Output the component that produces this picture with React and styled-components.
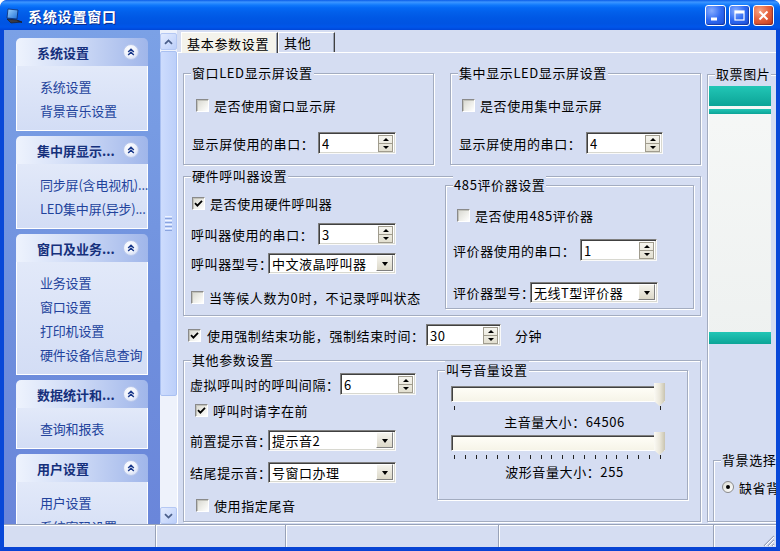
import React from 'react';
import styled, { createGlobalStyle } from 'styled-components';

const FONT = `"Noto Sans CJK SC", "Noto Sans", sans-serif`;
const BG = '#d5ddf2';

const Global = createGlobalStyle`
  html, body { margin: 0; padding: 0; overflow: hidden; background: #fff; }
  * { box-sizing: border-box; }
  body { font-family: ${FONT}; }
`;

const Window = styled.div`
  width: 780px; height: 551px; display: flex; flex-direction: column; overflow: hidden;
  background: #0a4fdc; border-radius: 7px 7px 0 0;
`;

const TitleBar = styled.div`
  height: 30px; flex: none; display: flex; align-items: center;
  padding: 1px 6px 0 5px;
  border-radius: 7px 7px 0 0;
  background: linear-gradient(180deg, #0a5ce8 0%, #3d95ff 7%, #2a8bff 11%, #1179fb 17%, #0468f4 26%, #025fea 42%, #0057e4 62%, #0054e2 78%, #0056ea 90%, #0046d8 100%);
`;

const TitleText = styled.div`
  margin-left: 5px; flex: 1; color: #fff; font-weight: 700; font-size: 14px;
  letter-spacing: 0.8px; text-shadow: 1px 1px 0 #0c2c8c;
`;

const CapButtons = styled.div` display: flex; gap: 3px; `;

const CapBtn = styled.div`
  width: 21px; height: 21px; flex: none; border: 1px solid #fff; border-radius: 3px;
  display: flex; align-items: center; justify-content: center;
  background: ${p => p.$close
    ? 'radial-gradient(circle at 30% 25%, #f6a484 0%, #e6643f 45%, #c4381a 100%)'
    : 'radial-gradient(circle at 30% 25%, #86acff 0%, #2e69f2 50%, #1a4ed6 100%)'};
  box-shadow: inset -1px -1px 1px rgba(0, 0, 60, 0.35);
`;

const Frame = styled.div`
  flex: 1; display: flex; flex-direction: column; min-height: 0;
  border-left: 4px solid #0848d8; border-right: 4px solid #0848d8; border-bottom: 4px solid #0844d4;
  background: ${BG};
`;

const Main = styled.div` height: 494px; flex: none; display: flex; overflow: hidden; `;

/* ---------- task pane ---------- */
const TaskPane = styled.div`
  width: 156px; flex: none; overflow: hidden;
  display: flex; flex-direction: column; gap: 5px; padding: 8px 12px 0;
  background: linear-gradient(180deg, #7ba1e6 0%, #6f8fdd 60%, #6a86da 100%);
`;

const PaneGroup = styled.div` display: flex; flex-direction: column; flex: none; `;

const PaneHeader = styled.div`
  height: 28px; display: flex; align-items: center; justify-content: space-between;
  padding: 0 9px 0 21px; border-radius: 5px 5px 0 0;
  background: linear-gradient(90deg, #eef3fd 0%, #cfdbf6 45%, #a0b6ea 100%);
  color: #15307c; font-weight: 700; font-size: 13px; white-space: nowrap;
`;

const PaneToggle = styled.div`
  width: 16px; height: 16px; border-radius: 50%; flex: none;
  display: flex; align-items: center; justify-content: center;
  background: radial-gradient(circle at 40% 35%, #ffffff 0%, #eef2fc 50%, #c4d1f1 100%);
  border: 1px solid #b9c8ec;
`;

const PaneBody = styled.div`
  padding: 9px 0 7px 23px; border: 1px solid #fff; border-top: none;
  background: linear-gradient(180deg, #e2e9f9 0%, #d3ddf5 100%);
`;

const PaneItem = styled.div`
  height: 24px; line-height: 24px; font-size: 13px; color: #22439c;
  white-space: nowrap; letter-spacing: -0.2px;
`;

/* ---------- scrollbar ---------- */
const VScroll = styled.div`
  width: 17px; flex: none; display: flex; flex-direction: column; padding-top: 3px;
  background: #eef2fb;
`;

const ScrollBtn = styled.div`
  height: 17px; flex: none; border: 1px solid #b5c8f3; border-radius: 2px;
  display: flex; align-items: center; justify-content: center;
  background: linear-gradient(135deg, #e3ebfe 0%, #bccffa 100%);
`;

const ScrollThumb = styled.div`
  height: 345px; flex: none; margin-top: 1px; border: 1px solid #a9c0f1; border-radius: 2px;
  display: flex; flex-direction: column; align-items: center; justify-content: center; gap: 1px;
  background: linear-gradient(90deg, #cddcfd 0%, #bccff9 100%);
`;

const GripLine = styled.span` width: 7px; height: 1px; background: ${p => p.$light ? '#eef3fe' : '#8aa4df'}; `;

const ScrollTrack = styled.div` flex: 1; `;

/* ---------- tabs ---------- */
const TabArea = styled.div`
  flex: 1; min-width: 0; display: flex; flex-direction: column; overflow: hidden; background: ${BG};
`;

const TabStrip = styled.div`
  height: 22px; flex: none; display: flex; align-items: flex-end; padding-left: 4px;
`;

const Tab = styled.div`
  width: ${p => p.$w}px; height: ${p => p.$active ? 21 : 20}px; margin-bottom: ${p => p.$active ? -1 : 0}px;
  padding-left: 5px; display: flex; align-items: center; flex: none;
  font-size: 13px; letter-spacing: 0.7px; color: #000; white-space: nowrap;
  background: ${p => p.$active ? '#f4f3ec' : BG};
  border: 1px solid; border-bottom: none; border-color: #fff #404040 transparent #fff;
  box-shadow: inset -1px 0 0 #9aa2b4;
  position: relative; z-index: ${p => p.$active ? 1 : 0};
`;

const TabPage = styled.div`
  flex: 1; min-height: 0; display: flex; gap: 6px; overflow: hidden;
  border-top: 1px solid #fff; border-left: 1px solid #fff; padding-left: 5px;
`;

const Column = styled.div`
  width: ${p => p.$w}px; flex: none; display: flex; flex-direction: column;
`;

const GroupRow = styled.div` display: flex; gap: ${p => p.$gap || 0}px; margin-top: ${p => p.$mt || 0}px; `;

const GroupBox = styled.div`
  position: relative; flex: none;
  width: ${p => p.$w}px; height: ${p => p.$h}px;
  margin-top: ${p => p.$mt || 0}px; margin-left: ${p => p.$ml || 0}px;
  padding: ${p => p.$pt || 0}px 0 0 ${p => p.$pl || 0}px;
  border: 1px solid #a3acc0;
  box-shadow: inset 1px 1px 0 #fff, 1px 1px 0 #fff;
  display: flex; flex-direction: ${p => p.$row ? 'row' : 'column'};
`;

const Legend = styled.span`
  position: absolute; top: -10px; left: 7px; padding: 0 1px; height: 18px; line-height: 18px;
  background: ${BG}; font-size: 13px; letter-spacing: 0.6px; color: #000; white-space: nowrap;
`;

const SubCol = styled.div`
  width: ${p => p.$w}px; flex: none; display: flex; flex-direction: column;
  padding: ${p => p.$pt || 0}px 0 0 ${p => p.$pl || 0}px;
`;

const Row = styled.div`
  display: flex; align-items: center; height: ${p => p.$h || 22}px; flex: none;
  margin-top: ${p => p.$mt || 0}px; margin-left: ${p => p.$ml || 0}px;
  gap: ${p => p.$gap || 0}px;
`;

const Text = styled.span`
  font-size: 13px; letter-spacing: 0.6px; color: #000; white-space: nowrap;
  ${p => p.$w ? `width: ${p.$w}px; flex: none;` : ''}
  ${p => p.$ml ? `margin-left: ${p.$ml}px;` : ''}
`;

const CheckBox = styled.span`
  width: 13px; height: 13px; flex: none; display: inline-flex; align-items: center; justify-content: center;
  border: 1px solid; border-color: #8a8a8a #ffffff #ffffff #8a8a8a;
  background: linear-gradient(135deg, #d6d6cf 0%, #eeeee9 55%, #ffffff 100%);
  box-shadow: inset 1px 1px 0 #c2c2ba;
`;

const Radio = styled.span`
  width: 12px; height: 12px; flex: none; border-radius: 50%;
  display: inline-flex; align-items: center; justify-content: center;
  border: 1px solid #8a8a8a; background: linear-gradient(135deg, #dcdcd4, #ffffff);
`;

const RadioDot = styled.span` width: 4px; height: 4px; border-radius: 50%; background: #000; `;

const FieldBox = styled.div`
  width: ${p => p.$w}px; height: ${p => p.$h || 22}px; flex: none;
  display: flex; align-items: center; padding-left: 3px;
  background: #fff;
  border: 1px solid; border-color: #7f7f7f #fafafa #fafafa #7f7f7f;
  box-shadow: inset 1px 1px 0 #404040, inset -1px -1px 0 #d8d8d0;
`;

const FieldValue = styled.span`
  flex: 1; font-size: 13px; letter-spacing: 0.5px; color: #000; white-space: nowrap; overflow: hidden;
`;

const SpinBtns = styled.div`
  width: 15px; height: 17px; margin-right: 2px; flex: none;
  display: flex; flex-direction: column;
  border: 1px solid #a09c8e; background: linear-gradient(180deg, #f6f5ef, #e2dfd0);
`;

const SpinHalf = styled.div`
  flex: 1; display: flex; align-items: center; justify-content: center;
  ${p => p.$bottom ? 'border-top: 1px solid #a09c8e;' : ''}
`;

const Tri = styled.span`
  width: 0; height: 0; border-left: 3px solid transparent; border-right: 3px solid transparent;
  ${p => p.$up ? 'border-bottom: 3px solid #000;' : 'border-top: 3px solid #000;'}
`;

const ComboBtn = styled.div`
  width: 17px; height: 16px; margin-right: 2px; flex: none;
  display: flex; align-items: center; justify-content: center;
  border: 1px solid; border-color: #ffffff #808080 #808080 #ffffff;
  background: linear-gradient(180deg, #f5f4ee, #dcd8c8);
`;

const ComboTri = styled.span`
  width: 0; height: 0; border-left: 3.5px solid transparent; border-right: 3.5px solid transparent;
  border-top: 4px solid #000; margin-top: 1px;
`;

/* ---------- slider ---------- */
const SliderWrap = styled.div`
  position: relative; width: 214px; flex: none; margin: ${p => p.$mt || 0}px 0 0 13px; padding-top: 3px;
`;

const SliderTrack = styled.div`
  height: 16px; border: 1px solid; border-color: #808080 #fff #fff #808080;
  box-shadow: inset 1px 1px 0 #404040;
  background: linear-gradient(180deg, #fffef8 0%, #f6f4e8 100%);
`;

const SliderThumb = styled.div`
  position: absolute; right: 0; top: 0; width: 11px; height: 23px;
  clip-path: polygon(0 0, 100% 0, 100% 78%, 50% 100%, 0 78%);
  background: linear-gradient(90deg, #fbfaf4 0%, #ebe8dc 50%, #c9c4b0 100%);
`;

const Ticks = styled.div`
  display: flex; justify-content: space-between; height: 4px; margin-top: 4px; padding: 0 4px 0 3px;
`;

const Tick = styled.span` width: 1px; height: 4px; background: #222; `;

const VolLabel = styled.div`
  height: 18px; line-height: 18px; margin-top: ${p => p.$mt || 0}px; padding-left: 4px;
  text-align: center; font-size: 13px; letter-spacing: 0.6px; color: #000; white-space: nowrap;
`;

/* ---------- picture ---------- */
const Picture = styled.div`
  width: 62px; flex: none; margin: 11px 0 0 1px; display: flex; flex-direction: column;
  background: linear-gradient(180deg, #f6f8f7, #eef1f0);
`;

const PicBand = styled.div`
  height: ${p => p.$h}px; flex: none; margin-top: ${p => p.$mt || 0}px;
  background: ${p => p.$teal ? 'linear-gradient(180deg, #22c6b6 0%, #0ca497 100%)' : 'transparent'};
`;

/* ---------- status bar ---------- */
const StatusBar = styled.div`
  height: 23px; flex: none; display: flex; background: ${BG};
  border-top: 1px solid #98a2b8; box-shadow: inset 0 1px 0 #fff;
`;

const StatusPanel = styled.div`
  ${p => p.$w ? `width: ${p.$w}px; flex: none;` : 'flex: 1;'}
  margin-right: 1px; border-right: ${p => p.$last ? 'none' : '1px solid #98a2b8'};
  box-shadow: ${p => p.$last ? 'none' : '1px 0 0 #fff'};
  display: flex; align-items: flex-end; justify-content: flex-end;
`;

/* ---------- small components ---------- */
const Check = ({ checked }) => (
  <CheckBox>
    {checked && (
      <svg width="9" height="9" viewBox="0 0 9 9">
        <path d="M1 4.2 L3.4 6.6 L8 1.8" fill="none" stroke="#000" strokeWidth="1.8" />
      </svg>
    )}
  </CheckBox>
);

const CheckRow = ({ checked, label, mt, ml }) => (
  <Row $mt={mt} $ml={ml} $gap={5}>
    <Check checked={checked} />
    <Text>{label}</Text>
  </Row>
);

const Spin = ({ value, w }) => (
  <FieldBox $w={w}>
    <FieldValue>{value}</FieldValue>
    <SpinBtns>
      <SpinHalf><Tri $up /></SpinHalf>
      <SpinHalf $bottom><Tri /></SpinHalf>
    </SpinBtns>
  </FieldBox>
);

const Combo = ({ value, w }) => (
  <FieldBox $w={w} $h={21}>
    <FieldValue>{value}</FieldValue>
    <ComboBtn><ComboTri /></ComboBtn>
  </FieldBox>
);

const Slider = ({ mt, ticks }) => (
  <SliderWrap $mt={mt}>
    <SliderTrack />
    <SliderThumb />
    <Ticks>
      {Array.from({ length: ticks }).map((_, i) => <Tick key={i} />)}
    </Ticks>
  </SliderWrap>
);

const DoubleChevron = () => (
  <svg width="8" height="8" viewBox="0 0 8 8">
    <path d="M1.2 4 L4 1.3 L6.8 4 M1.2 7 L4 4.3 L6.8 7" fill="none" stroke="#1b3a8c" strokeWidth="1.5" />
  </svg>
);

const ArrowIcon = ({ down }) => (
  <svg width="9" height="6" viewBox="0 0 9 6">
    <path d={down ? 'M1 1.2 L4.5 4.6 L8 1.2' : 'M1 4.8 L4.5 1.4 L8 4.8'} fill="none" stroke="#4b5f8a" strokeWidth="1.8" />
  </svg>
);

const AppIcon = () => (
  <svg width="18" height="18" viewBox="0 0 18 18">
    <defs>
      <linearGradient id="scr" x1="0" y1="0" x2="1" y2="1">
        <stop offset="0" stopColor="#9fd4ff" />
        <stop offset="1" stopColor="#1d6fd6" />
      </linearGradient>
    </defs>
    <polygon points="3,2 13,3 12,12 2,11" fill="url(#scr)" stroke="#0b2c6e" strokeWidth="0.8" />
    <polygon points="2,12 12,13 17,15 6,16" fill="#3a3a46" stroke="#15151c" strokeWidth="0.6" />
    <polygon points="12,13 17,15 17,16 12,14" fill="#22222a" />
  </svg>
);

const paneGroups = [
  { title: '系统设置', items: ['系统设置', '背景音乐设置'] },
  { title: '集中屏显示...', items: ['同步屏(含电视机)...', 'LED集中屏(异步)...'] },
  { title: '窗口及业务...', items: ['业务设置', '窗口设置', '打印机设置', '硬件设备信息查询'] },
  { title: '数据统计和...', items: ['查询和报表'] },
  { title: '用户设置', items: ['用户设置', '系统密码设置'] },
];

export default function App() {
  return (
    <>
      <Global />
      <Window>
        <TitleBar>
          <AppIcon />
          <TitleText>系统设置窗口</TitleText>
          <CapButtons>
            <CapBtn>
              <svg width="13" height="13" viewBox="0 0 13 13"><rect x="2" y="8.5" width="6" height="3" fill="#fff" /></svg>
            </CapBtn>
            <CapBtn>
              <svg width="13" height="13" viewBox="0 0 13 13">
                <rect x="2" y="2" width="9" height="9" fill="none" stroke="#fff" strokeWidth="1.2" />
                <rect x="2" y="2" width="9" height="2.5" fill="#fff" />
              </svg>
            </CapBtn>
            <CapBtn $close>
              <svg width="13" height="13" viewBox="0 0 13 13">
                <path d="M2.5 2.5 L10.5 10.5 M10.5 2.5 L2.5 10.5" stroke="#fff" strokeWidth="2" />
              </svg>
            </CapBtn>
          </CapButtons>
        </TitleBar>

        <Frame>
          <Main>
            <TaskPane>
              {paneGroups.map(g => (
                <PaneGroup key={g.title}>
                  <PaneHeader>
                    <span>{g.title}</span>
                    <PaneToggle><DoubleChevron /></PaneToggle>
                  </PaneHeader>
                  <PaneBody>
                    {g.items.map(it => <PaneItem key={it}>{it}</PaneItem>)}
                  </PaneBody>
                </PaneGroup>
              ))}
            </TaskPane>

            <VScroll>
              <ScrollBtn><ArrowIcon /></ScrollBtn>
              <ScrollThumb>
                <GripLine $light /><GripLine /><GripLine $light /><GripLine /><GripLine $light /><GripLine /><GripLine $light /><GripLine />
              </ScrollThumb>
              <ScrollTrack />
              <ScrollBtn><ArrowIcon down /></ScrollBtn>
            </VScroll>

            <TabArea>
              <TabStrip>
                <Tab $w={97} $active>基本参数设置</Tab>
                <Tab $w={57}>其他</Tab>
              </TabStrip>
              <TabPage>
                <Column $w={518}>
                  <GroupRow $gap={16} $mt={20}>
                    <GroupBox $w={251} $h={92} $pt={20} $pl={8}>
                      <Legend>窗口LED显示屏设置</Legend>
                      <CheckRow ml={4} label="是否使用窗口显示屏" />
                      <Row $mt={16}>
                        <Text $w={126}>显示屏使用的串口：</Text>
                        <Spin value="4" w={78} />
                      </Row>
                    </GroupBox>
                    <GroupBox $w={251} $h={92} $pt={20} $pl={8}>
                      <Legend>集中显示LED显示屏设置</Legend>
                      <CheckRow ml={3} label="是否使用集中显示屏" />
                      <Row $mt={16}>
                        <Text $w={127}>显示屏使用的串口：</Text>
                        <Spin value="4" w={77} />
                      </Row>
                    </GroupBox>
                  </GroupRow>

                  <GroupBox $w={518} $h={140} $mt={11} $row>
                    <Legend>硬件呼叫器设置</Legend>
                    <SubCol $w={261} $pt={15} $pl={7}>
                      <CheckRow ml={1} checked label="是否使用硬件呼叫器" />
                      <Row $mt={9}>
                        <Text $w={127}>呼叫器使用的串口：</Text>
                        <Spin value="3" w={78} />
                      </Row>
                      <Row $mt={7}>
                        <Text $w={77}>呼叫器型号：</Text>
                        <Combo value="中文液晶呼叫器" w={128} />
                      </Row>
                      <CheckRow mt={12} label="当等候人数为0时，不记录呼叫状态" />
                    </SubCol>
                    <GroupBox $w={249} $h={124} $mt={8} $pt={18} $pl={7}>
                      <Legend>485评价器设置</Legend>
                      <CheckRow ml={4} label="是否使用485评价器" />
                      <Row $mt={13}>
                        <Text $w={127}>评价器使用的串口：</Text>
                        <Spin value="1" w={77} />
                      </Row>
                      <Row $mt={20}>
                        <Text $w={77}>评价器型号：</Text>
                        <Combo value="无线T型评价器" w={128} />
                      </Row>
                    </GroupBox>
                  </GroupBox>

                  <Row $mt={8} $ml={5} $gap={6}>
                    <Check checked />
                    <Text $w={213}>使用强制结束功能，强制结束时间：</Text>
                    <Spin value="30" w={75} />
                    <Text $ml={8}>分钟</Text>
                  </Row>

                  <GroupBox $w={518} $h={162} $mt={14} $row>
                    <Legend>其他参数设置</Legend>
                    <SubCol $w={253} $pt={12} $pl={6}>
                      <Row>
                        <Text $w={150}>虚拟呼叫时的呼叫间隔：</Text>
                        <Spin value="6" w={76} />
                      </Row>
                      <CheckRow mt={4} ml={5} checked label="呼叫时请字在前" />
                      <Row $mt={8}>
                        <Text $w={78}>前置提示音：</Text>
                        <Combo value="提示音2" w={128} />
                      </Row>
                      <Row $mt={10}>
                        <Text $w={78}>结尾提示音：</Text>
                        <Combo value="号窗口办理" w={128} />
                      </Row>
                      <CheckRow mt={11} ml={6} label="使用指定尾音" />
                    </SubCol>
                    <GroupBox $w={251} $h={130} $mt={9}>
                      <Legend>叫号音量设置</Legend>
                      <Slider mt={12} ticks={2} />
                      <VolLabel $mt={3}>主音量大小：64506</VolLabel>
                      <Slider mt={1} ticks={20} />
                      <VolLabel $mt={4}>波形音量大小：255</VolLabel>
                    </GroupBox>
                  </GroupBox>
                </Column>

                <Column $w={90}>
                  <GroupBox $w={90} $h={448} $mt={21}>
                    <Legend>取票图片</Legend>
                    <Picture>
                      <PicBand $teal $h={20} />
                      <PicBand $teal $h={5} $mt={3} />
                      <PicBand $h={218} />
                      <PicBand $teal $h={12} />
                    </Picture>
                    <GroupBox $w={80} $h={62} $mt={116} $ml={5} $pt={20} $pl={8}>
                      <Legend>背景选择</Legend>
                      <Row $gap={5} $h={12}>
                        <Radio><RadioDot /></Radio>
                        <Text>缺省背景</Text>
                      </Row>
                    </GroupBox>
                  </GroupBox>
                </Column>
              </TabPage>
            </TabArea>
          </Main>

          <StatusBar>
            <StatusPanel $w={152} />
            <StatusPanel $w={129} />
            <StatusPanel $w={212} />
            <StatusPanel $w={214} />
            <StatusPanel $last>
              <svg width="14" height="14" viewBox="0 0 14 14">
                <path d="M13 3 L3 13 M13 7 L7 13 M13 11 L11 13" stroke="#98a2b8" strokeWidth="1.2" />
                <path d="M13 4 L4 13 M13 8 L8 13 M13 12 L12 13" stroke="#fff" strokeWidth="1" />
              </svg>
            </StatusPanel>
          </StatusBar>
        </Frame>
      </Window>
    </>
  );
}
